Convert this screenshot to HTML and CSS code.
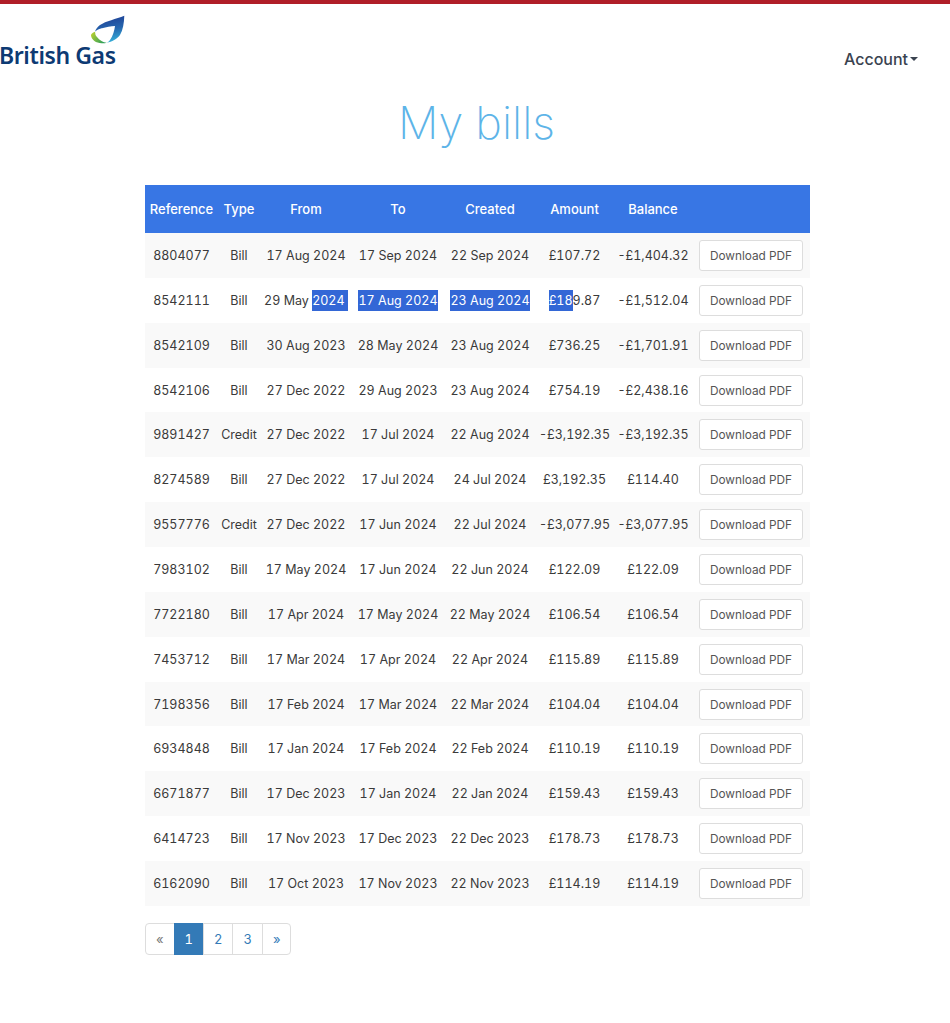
FILE: index.html
```html
<!DOCTYPE html>
<html lang="en">
<head>
<meta charset="utf-8">
<title>My bills</title>
<link rel="stylesheet" href="styles.css">
</head>
<body>
<header class="topbar">
  <a class="logo" href="#">
    <svg class="logo-mark" viewBox="0 0 36 32" aria-hidden="true">
      <defs>
        <linearGradient id="flameBlue" x1="0.5" y1="0" x2="0.7" y2="1">
          <stop offset="0" stop-color="#1f3f94"/>
          <stop offset="0.5" stop-color="#2668b0"/>
          <stop offset="1" stop-color="#38b6dc"/>
        </linearGradient>
        <linearGradient id="flameGreen" x1="0" y1="0" x2="1" y2="0.6">
          <stop offset="0" stop-color="#c4d42c"/>
          <stop offset="1" stop-color="#2f9f5a"/>
        </linearGradient>
      </defs>
      <path fill="url(#flameBlue)" d="M34.300 1.700C26 5 16 7 10 11C7.500 13 5.500 15.500 5 17.700C8 15 11 14.500 12 14.300C16 13 21 12 25 12C24.500 16 23 22 20 26C19 27.500 18 28 16.700 28.700C22 28 27 25 30 21C33 16 34 9 34.300 1.700Z"/>
      <path fill="url(#flameGreen)" d="M5 17.700C2.500 18.500 0.800 20 1 21.500C1.500 26 6 29 11.700 29.300C13.500 29.400 15.500 29.200 16.700 28.700C12.500 28.500 8 25 5.500 21Z"/>
    </svg>
    <span class="logo-text">British Gas</span>
  </a>
  <a class="account" href="#">Account<span class="caret"></span></a>
</header>

<h1 class="title">My bills</h1>

<main class="content">
  <table class="bills">
    <colgroup>
      <col class="c-ref"><col class="c-type"><col class="c-date"><col class="c-date"><col class="c-date"><col class="c-amt"><col class="c-bal"><col class="c-act">
    </colgroup>
    <thead>
      <tr><th>Reference</th><th>Type</th><th>From</th><th>To</th><th>Created</th><th>Amount</th><th>Balance</th><th></th></tr>
    </thead>
    <tbody>
      <tr><td>8804077</td><td>Bill</td><td>17 Aug 2024</td><td>17 Sep 2024</td><td>22 Sep 2024</td><td>£107.72</td><td>-£1,404.32</td><td><a class="btn" href="#">Download PDF</a></td></tr>
      <tr><td>8542111</td><td>Bill</td><td>29 May <span class="sel">2024&nbsp;</span></td><td><span class="sel">17 Aug 2024</span></td><td><span class="sel">23 Aug 2024</span></td><td><span class="sel">£18</span>9.87</td><td>-£1,512.04</td><td><a class="btn" href="#">Download PDF</a></td></tr>
      <tr><td>8542109</td><td>Bill</td><td>30 Aug 2023</td><td>28 May 2024</td><td>23 Aug 2024</td><td>£736.25</td><td>-£1,701.91</td><td><a class="btn" href="#">Download PDF</a></td></tr>
      <tr><td>8542106</td><td>Bill</td><td>27 Dec 2022</td><td>29 Aug 2023</td><td>23 Aug 2024</td><td>£754.19</td><td>-£2,438.16</td><td><a class="btn" href="#">Download PDF</a></td></tr>
      <tr><td>9891427</td><td>Credit</td><td>27 Dec 2022</td><td>17 Jul 2024</td><td>22 Aug 2024</td><td>-£3,192.35</td><td>-£3,192.35</td><td><a class="btn" href="#">Download PDF</a></td></tr>
      <tr><td>8274589</td><td>Bill</td><td>27 Dec 2022</td><td>17 Jul 2024</td><td>24 Jul 2024</td><td>£3,192.35</td><td>£114.40</td><td><a class="btn" href="#">Download PDF</a></td></tr>
      <tr><td>9557776</td><td>Credit</td><td>27 Dec 2022</td><td>17 Jun 2024</td><td>22 Jul 2024</td><td>-£3,077.95</td><td>-£3,077.95</td><td><a class="btn" href="#">Download PDF</a></td></tr>
      <tr><td>7983102</td><td>Bill</td><td>17 May 2024</td><td>17 Jun 2024</td><td>22 Jun 2024</td><td>£122.09</td><td>£122.09</td><td><a class="btn" href="#">Download PDF</a></td></tr>
      <tr><td>7722180</td><td>Bill</td><td>17 Apr 2024</td><td>17 May 2024</td><td>22 May 2024</td><td>£106.54</td><td>£106.54</td><td><a class="btn" href="#">Download PDF</a></td></tr>
      <tr><td>7453712</td><td>Bill</td><td>17 Mar 2024</td><td>17 Apr 2024</td><td>22 Apr 2024</td><td>£115.89</td><td>£115.89</td><td><a class="btn" href="#">Download PDF</a></td></tr>
      <tr><td>7198356</td><td>Bill</td><td>17 Feb 2024</td><td>17 Mar 2024</td><td>22 Mar 2024</td><td>£104.04</td><td>£104.04</td><td><a class="btn" href="#">Download PDF</a></td></tr>
      <tr><td>6934848</td><td>Bill</td><td>17 Jan 2024</td><td>17 Feb 2024</td><td>22 Feb 2024</td><td>£110.19</td><td>£110.19</td><td><a class="btn" href="#">Download PDF</a></td></tr>
      <tr><td>6671877</td><td>Bill</td><td>17 Dec 2023</td><td>17 Jan 2024</td><td>22 Jan 2024</td><td>£159.43</td><td>£159.43</td><td><a class="btn" href="#">Download PDF</a></td></tr>
      <tr><td>6414723</td><td>Bill</td><td>17 Nov 2023</td><td>17 Dec 2023</td><td>22 Dec 2023</td><td>£178.73</td><td>£178.73</td><td><a class="btn" href="#">Download PDF</a></td></tr>
      <tr><td>6162090</td><td>Bill</td><td>17 Oct 2023</td><td>17 Nov 2023</td><td>22 Nov 2023</td><td>£114.19</td><td>£114.19</td><td><a class="btn" href="#">Download PDF</a></td></tr>
    </tbody>
  </table>
  <nav class="pagination">
    <a class="page page-muted" href="#">«</a>
    <a class="page page-active" href="#">1</a>
    <a class="page" href="#">2</a>
    <a class="page" href="#">3</a>
    <a class="page" href="#">»</a>
  </nav>
</main>
</body>
</html>
```
FILE: styles.css
```css
* { box-sizing: border-box; }
html, body { margin: 0; padding: 0; }
body {
  min-height: 1023px;
  background: #fff;
  color: #3a3a3a;
  font-family: Inter, "Noto Sans", sans-serif;
  font-size: 12.500px;
  font-variant-numeric: tabular-nums;
  border-top: 4px solid #b01e28;
  overflow-x: hidden;
}
a { text-decoration: none; }

.topbar {
  height: 80px;
  display: flex;
  justify-content: space-between;
  align-items: flex-start;
}
.logo {
  width: 126px;
  height: 64px;
  display: flex;
  flex-direction: column;
  align-items: flex-end;
  padding-top: 10px;
}
.logo-mark { width: 36px; height: 32px; display: block; }
.logo-text {
  align-self: flex-start;
  margin: -2px 0 0 -1px;
  color: #0d3a73;
  font-family: "Noto Sans", sans-serif;
  font-size: 23px;
  line-height: 22px;
  font-weight: 600;
  white-space: nowrap;
  letter-spacing: -0.400px;
}
.account {
  margin: 44px 32px 0 0;
  color: #3a4350;
  font-size: 16px;
  line-height: 22px;
  font-weight: 500;
  display: flex;
  align-items: center;
}
.caret {
  width: 0;
  height: 0;
  margin-left: 2px;
  border-top: 4px solid #3a4350;
  border-left: 4px solid transparent;
  border-right: 4px solid transparent;
}

.title {
  margin: 6px 0 0;
  padding-left: 3px;
  height: 95px;
  text-align: center;
  color: #5db4e8;
  font-size: 45px;
  line-height: 66px;
  font-weight: 200;
}

.content { width: 665px; margin-left: 145px; }

.bills {
  width: 665px;
  table-layout: fixed;
  border-collapse: collapse;
}
.c-ref { width: 73px; }
.c-type { width: 42px; }
.c-date { width: 92px; }
.c-amt { width: 77px; }
.c-bal { width: 80px; }
.c-act { width: 117px; }

.bills th {
  height: 48px;
  padding: 0;
  background: #3876e4;
  color: #fff;
  font-size: 13px;
  font-weight: 500;
  text-align: center;
}
.bills td {
  height: 44.870px;
  padding: 0;
  text-align: center;
  white-space: nowrap;
}
.bills tbody tr:nth-child(odd) td { background: #f9f9f9; }

.sel {
  background: #3367d6;
  color: #fff;
  padding: 3px 0;
}

.btn {
  display: inline-block;
  width: 103.500px;
  height: 31px;
  margin-right: 1px;
  line-height: 30px;
  border: 1px solid #ddd;
  border-radius: 3px;
  background: #fff;
  color: #555;
  font-size: 11.800px;
  text-align: center;
}

.pagination {
  display: flex;
  width: max-content;
  margin-top: 17px;
}
.page {
  height: 32px;
  line-height: 30px;
  padding: 0 10px;
  margin-left: -1px;
  border: 1px solid #ddd;
  background: #fff;
  color: #337ab7;
  font-size: 13px;
}
.page:first-child { margin-left: 0; border-radius: 4px 0 0 4px; }
.page:last-child { border-radius: 0 4px 4px 0; }
.page-muted { color: #777; }
.page-active { background: #337ab7; border-color: #337ab7; color: #fff; }
```
